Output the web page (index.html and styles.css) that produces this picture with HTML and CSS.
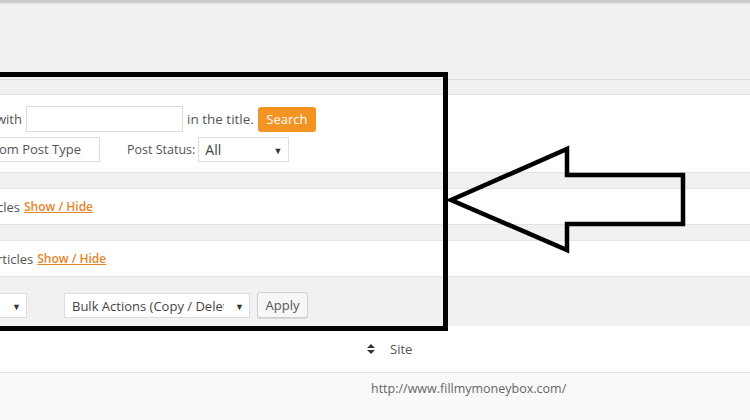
FILE: index.html
```html
<!DOCTYPE html>
<html>
<head>
<meta charset="utf-8">
<link rel="stylesheet" href="styles.css">
</head>
<body>
<div class="topbar"></div>
<div class="page">
  <div class="sec-head"></div>
  <div class="panel search-panel">
    <div class="row">
      <span class="lead">with</span>
      <span class="input title-input"></span>
      <span class="txt after-input">in the title.</span>
      <span class="btn-primary">Search</span>
    </div>
    <div class="row">
      <span class="input type-input">om Post Type</span>
      <span class="txt status-label">Post Status:</span>
      <span class="select status-select">All<span class="caret">▼</span></span>
    </div>
  </div>
  <div class="panel line-panel">
    <span class="lead">cles</span>
    <a class="toggle" href="#">Show / Hide</a>
  </div>
  <div class="panel line-panel second">
    <span class="lead">rticles</span>
    <a class="toggle" href="#">Show / Hide</a>
  </div>
  <div class="toolbar">
    <span class="select first-select"><span class="caret">▼</span></span>
    <span class="select bulk-select"><span class="sel-text">Bulk Actions (Copy / Delete)</span><span class="caret">▼</span></span>
    <span class="btn">Apply</span>
  </div>
  <div class="thead">
    <span class="sort">
      <svg width="8" height="10" viewBox="0 0 8 10"><path d="M4 0 L8 4 L0 4 Z M4 10 L8 6 L0 6 Z" fill="#333"/></svg>
    </span>
    <span class="col-title">Site</span>
  </div>
  <div class="trow">
    <span class="url">http://www.fillmymoneybox.com/</span>
  </div>
</div>
<div class="highlight-box"></div>
<svg class="arrow" width="750" height="420" viewBox="0 0 750 420">
  <path d="M451 200 L567 149 L567 175 L683 175 L683 224 L567 224 L567 250 Z" fill="none" stroke="#000" stroke-width="4.5" stroke-linejoin="miter"/>
</svg>
</body>
</html>
```

FILE: styles.css
```css
html, body {
  margin: 0;
  padding: 0;
}
body {
  width: 750px;
  height: 420px;
  overflow: hidden;
  background: #f1f1f1;
  font-family: "Open Sans", "Noto Sans", sans-serif;
  font-size: 13px;
  color: #555;
  position: relative;
}
.topbar {
  height: 3px;
  background: linear-gradient(#c4c4c4, #d2d2d2);
  border-bottom: 1px solid #e0e0e0;
}
.page {
  padding-top: 75px;
}
.sec-head {
  height: 14px;
  border-top: 1px solid #dedede;
  background: #f1f1f1;
}
.panel {
  background: #fff;
  border-top: 1px solid #e3e3e3;
  border-bottom: 1px solid #e3e3e3;
}
.search-panel {
  padding: 11px 0 10px 0;
  display: flex;
  flex-direction: column;
  gap: 4px;
}
.row {
  display: flex;
  align-items: center;
  height: 26px;
}
.lead {
  margin-left: -4px;
}
.input {
  box-sizing: border-box;
  height: 26px;
  background: #fff;
  border: 1px solid #dcdcdc;
  display: flex;
  align-items: center;
}
.title-input {
  width: 157px;
  margin-left: 4px;
}
.after-input {
  margin-left: 4px;
  font-size: 13.5px;
}
.btn-primary {
  box-sizing: border-box;
  margin-left: 4px;
  width: 58px;
  height: 25px;
  background: #f39321;
  border-radius: 3px;
  color: #fff;
  display: flex;
  align-items: center;
  justify-content: center;
}
.type-input {
  width: 110px;
  margin-left: -10px;
  padding-left: 8px;
  height: 25px;
}
.status-label {
  margin-left: 27px;
  font-size: 12.5px;
}
.select {
  box-sizing: border-box;
  height: 25px;
  background: #fff;
  border: 1px solid #dcdcdc;
  display: flex;
  align-items: center;
  position: relative;
  color: #444;
}
.caret {
  position: absolute;
  font-size: 9px;
  color: #333;
  top: 6px;
}
.status-select {
  margin-left: 3px;
  width: 91px;
  padding-left: 6px;
  font-size: 14px;
}
.status-select .caret {
  right: 6px;
}
.line-panel {
  margin-top: 15px;
  height: 35px;
  display: flex;
  align-items: center;
}
.line-panel .lead {
  margin-left: -3px;
}
.toggle {
  margin-left: 4px;
  color: #e5852a;
  font-weight: 600;
  font-size: 12px;
  text-decoration: underline;
}
.toolbar {
  height: 49px;
  display: flex;
  align-items: center;
  padding-top: 8px;
  box-sizing: border-box;
}
.first-select {
  margin-left: -10px;
  width: 37px;
}
.first-select .caret {
  right: 5px;
}
.bulk-select {
  margin-left: 37px;
  width: 186px;
  padding-left: 7px;
  overflow: hidden;
  white-space: nowrap;
}
.sel-text {
  display: block;
  width: 152px;
  overflow: hidden;
  color: #444;
}
.bulk-select .caret {
  right: 5px;
}
.btn {
  box-sizing: border-box;
  margin-left: 7px;
  width: 51px;
  height: 26px;
  margin-top: -2px;
  background: #f7f7f7;
  border: 1px solid #cfcfcf;
  border-radius: 3px;
  box-shadow: 0 1px 0 #d9d9d9;
  display: flex;
  align-items: center;
  justify-content: center;
  color: #555;
}
.thead {
  height: 46px;
  background: #fff;
  border-bottom: 1px solid #e1e1e1;
  display: flex;
  align-items: center;
}
.sort {
  margin-left: 367px;
  display: flex;
  align-items: center;
}
.col-title {
  margin-left: 15px;
  color: #555;
}
.trow {
  height: 60px;
  background: #f9f9f9;
  padding-left: 371px;
  padding-top: 6px;
  box-sizing: border-box;
}
.url {
  font-size: 12.5px;
  color: #666;
}
.highlight-box {
  position: absolute;
  left: -20px;
  top: 72px;
  width: 458px;
  height: 249px;
  border: 5px solid #000;
}
.arrow {
  position: absolute;
  left: 0;
  top: 0;
}
```
